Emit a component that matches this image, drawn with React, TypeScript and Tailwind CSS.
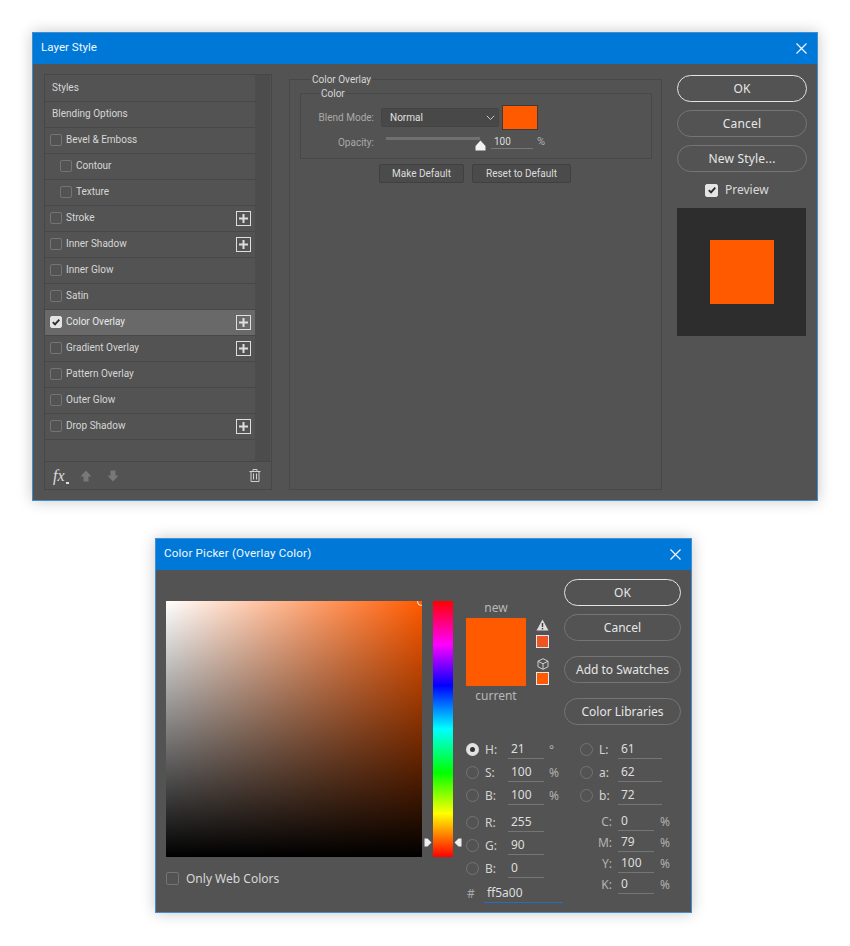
import React from "react";

function Close() {
  return (
    <svg width="11" height="11" viewBox="0 0 11 11" className="shrink-0">
      <path d="M0.5 0.5L10.5 10.5M10.5 0.5L0.5 10.5" stroke="#fff" strokeWidth="1.1" fill="none" />
    </svg>
  );
}

function TitleBar({ title, tracking = "tracking-normal" }: { title: string; tracking?: string }) {
  return (
    <div className={`flex h-[31px] items-center justify-between bg-[#0078d7] pb-[1px] pl-[8px] pr-[10px] font-['Roboto',sans-serif] text-[11.6px] text-[#f2f8fd] ${tracking}`}>
      <span>{title}</span>
      <Close />
    </div>
  );
}

function Check({ checked, size = "w-[12px] h-[12px]" }: { checked?: boolean; size?: string }) {
  return (
    <span
      className={`flex shrink-0 items-center justify-center rounded-[2px] border ${size} ${
        checked ? "border-[#e4e4e4] bg-[#e4e4e4]" : "border-[#747474] bg-transparent"
      }`}
    >
      {checked && (
        <svg width="10" height="10" viewBox="0 0 10 10">
          <path d="M1.8 5.2L4 7.4L8.3 2.6" stroke="#2c2c2c" strokeWidth="1.9" fill="none" />
        </svg>
      )}
    </span>
  );
}

function PlusBox() {
  return (
    <svg width="15" height="15" viewBox="0 0 15 15" className="block shrink-0">
      <rect x="0.5" y="0.5" width="14" height="14" fill="none" stroke="#dedede" />
      <path d="M7.5 3V12M3 7.5H12" stroke="#dedede" strokeWidth="2" />
    </svg>
  );
}

const rows: { label: string; check?: boolean; nested?: boolean; plus?: boolean; on?: boolean }[] = [
  { label: "Styles" },
  { label: "Blending Options" },
  { label: "Bevel & Emboss", check: true },
  { label: "Contour", check: true, nested: true },
  { label: "Texture", check: true, nested: true },
  { label: "Stroke", check: true, plus: true },
  { label: "Inner Shadow", check: true, plus: true },
  { label: "Inner Glow", check: true },
  { label: "Satin", check: true },
  { label: "Color Overlay", check: true, plus: true, on: true },
  { label: "Gradient Overlay", check: true, plus: true },
  { label: "Pattern Overlay", check: true },
  { label: "Outer Glow", check: true },
  { label: "Drop Shadow", check: true, plus: true },
];

function StyleRow({ r }: { r: (typeof rows)[number] }) {
  const pad = !r.check ? "pl-[7px]" : r.nested ? "pl-[15px]" : "pl-[5px]";
  return (
    <div
      className={`flex h-[26px] items-center border-b border-[#484848] pb-[2px] pr-[4px] text-[#d6d6d6] ${pad} ${
        r.on ? "bg-[#696969] text-[#e8e8e8]" : ""
      }`}
    >
      {r.check && <Check checked={r.on} />}
      <span className={r.check ? "ml-[4px]" : ""}>{r.label}</span>
      {r.plus && (
        <span className="ml-auto mt-[1px]">
          <PlusBox />
        </span>
      )}
    </div>
  );
}

function BlockArrow({ down }: { down?: boolean }) {
  return (
    <svg width="12" height="12" viewBox="0 0 12 12" className={down ? "rotate-180" : ""}>
      <path d="M6 0.5L11.5 6.5H8.5V11.5H3.5V6.5H0.5Z" fill="#787878" />
    </svg>
  );
}

function Trash() {
  return (
    <svg width="12" height="13" viewBox="0 0 12 13" fill="none" stroke="#cfcfcf">
      <path d="M0.5 2.5H11.5M4 2.5V0.5H8V2.5M2 2.5V12.5H10V2.5M4.5 4.5V10.5M7.5 4.5V10.5" />
    </svg>
  );
}

function LeftPanel() {
  return (
    <div className="mt-[2px] h-[416px] w-[228px] shrink-0 border border-[#474747]">
      <div className="flex h-[387px] border-b border-[#474747]">
        <div className="w-[210px] pt-[1px]">
          {rows.map((r) => (
            <StyleRow key={r.label} r={r} />
          ))}
        </div>
        <div className="w-[15px] bg-[#4c4c4c]" />
      </div>
      <div className="flex h-[27px] items-center pl-[8px] pr-[10px]">
        <span className="relative w-[25px] font-['Liberation_Serif',serif] text-[16px] italic text-[#dcdcdc]">
          fx
          <span className="absolute left-[13px] top-[18px] h-[2px] w-[3px] bg-[#e0e0e0]" />
        </span>
        <span className="ml-[2px]">
          <BlockArrow />
        </span>
        <span className="ml-[15px]">
          <BlockArrow down />
        </span>
        <span className="ml-auto">
          <Trash />
        </span>
      </div>
    </div>
  );
}

function ThinButton({ children, w }: { children: React.ReactNode; w: string }) {
  return (
    <div className={`flex h-[19px] items-center justify-center rounded-[2px] border border-[#404040] bg-[#4b4b4b] text-[#dcdcdc] ${w}`}>
      {children}
    </div>
  );
}

function MiddlePanel() {
  return (
    <fieldset className="h-[418px] w-[373px] shrink-0 border border-[#484848] pl-[10px] pr-[9px] text-[#d6d6d6]">
      <legend className="ml-[11px] h-[14px] px-[1px] leading-[16px]">Color Overlay</legend>
      <fieldset className="h-[73px] w-[352px] border border-[#484848]">
        <legend className="ml-[19px] h-[14px] px-[1px] leading-[16px]">Color</legend>
        <div className="mt-[5px] flex h-[25px] items-center">
          <span className="w-[73px] text-right text-[#a9a9a9]">Blend Mode:</span>
          <div className="ml-[7px] flex h-[19px] w-[118px] items-center justify-between rounded-[2px] border border-[#444444] bg-[#484848] pl-[8px] pr-[3px] text-[#e0e0e0]">
            <span>Normal</span>
            <svg width="9" height="6" viewBox="0 0 9 6">
              <path d="M0.8 0.8L4.5 4.5L8.2 0.8" stroke="#c6c6c6" fill="none" />
            </svg>
          </div>
          <div className="ml-[3px] h-[25px] w-[36px] border border-[#3c3c3c] bg-[#ff5a00]" />
        </div>
        <div className="mt-[1px] flex h-[22px] items-center">
          <span className="w-[73px] text-right text-[#a9a9a9]">Opacity:</span>
          <div className="relative ml-[12px] mt-[6px] h-[3px] w-[94px] self-start bg-[#707070]">
            <svg width="11" height="11" viewBox="0 0 11 11" className="absolute left-[89px] top-[3px]">
              <path d="M5.5 0.5L10.5 6V10.5H0.5V6Z" fill="#f2f2f2" />
            </svg>
          </div>
          <div className="ml-[11px] h-[14px] w-[42px] border-b border-[#777777] pl-[3px] leading-[13px] text-[#dcdcdc]">100</div>
          <span className="ml-[4px] text-[11px] text-[#b4b4b4]">%</span>
        </div>
      </fieldset>
      <div className="ml-[79px] mt-[5px] flex gap-[8px]">
        <ThinButton w="w-[85px]">Make Default</ThinButton>
        <ThinButton w="w-[99px]">Reset to Default</ThinButton>
      </div>
    </fieldset>
  );
}

function PillButton({
  children,
  primary,
  w,
  tracking = "tracking-[0.2px]",
  className = "",
}: {
  children: React.ReactNode;
  primary?: boolean;
  w: string;
  tracking?: string;
  className?: string;
}) {
  return (
    <div
      className={`flex h-[27px] items-center justify-center rounded-[14px] border font-['Noto_Sans',sans-serif] text-[12px] text-[#e6e6e6] ${tracking} ${w} ${
        primary ? "border-[#e4e4e4]" : "border-[#757575]"
      } ${className}`}
    >
      {children}
    </div>
  );
}

function RightPanel() {
  return (
    <div className="ml-[15px] mt-[3px] flex w-[130px] shrink-0 flex-col">
      <PillButton primary w="w-[130px]">OK</PillButton>
      <PillButton w="w-[130px]" className="mt-[8px]">Cancel</PillButton>
      <PillButton w="w-[130px]" className="mt-[8px]">New Style...</PillButton>
      <div className="ml-[28px] mt-[11px] flex h-[14px] items-center font-['Noto_Sans',sans-serif] text-[12px] text-[#dadada]">
        <Check checked size="w-[13px] h-[13px]" />
        <span className="ml-[7px]">Preview</span>
      </div>
      <div className="mt-[11px] flex h-[128px] w-[129px] items-center justify-center bg-[#2d2d2d]">
        <div className="h-[64px] w-[64px] bg-[#ff5a00]" />
      </div>
    </div>
  );
}

function LayerStyle() {
  return (
    <div className="h-[469px] w-[786px] border border-[#3f8fd2] bg-[#535353] font-['Roboto',sans-serif] text-[10px] shadow-[0_0_14px_rgba(0,0,0,0.22)]">
      <TitleBar title="Layer Style" />
      <div className="flex pl-[11px] pt-[8px]">
        <LeftPanel />
        <div className="ml-[17px]">
          <MiddlePanel />
        </div>
        <RightPanel />
      </div>
    </div>
  );
}

function Radio({ on }: { on?: boolean }) {
  return on ? (
    <span className="flex h-[13px] w-[13px] shrink-0 items-center justify-center rounded-full bg-[#e2e2e2]">
      <span className="h-[5px] w-[5px] rounded-full bg-[#333333]" />
    </span>
  ) : (
    <span className="h-[13px] w-[13px] shrink-0 rounded-full border border-[#747474]" />
  );
}

function Field({ value, w, blue }: { value: string; w: string; blue?: boolean }) {
  return (
    <div className={`h-[19px] border-b pl-[3px] leading-[18px] text-[#dedede] ${w} ${blue ? "border-[#2a6db5]" : "border-[#757575]"}`}>
      {value}
    </div>
  );
}

function ValueRow({ label, value, unit, on, lab }: { label: string; value: string; unit?: string; on?: boolean; lab?: boolean }) {
  return (
    <div className="flex h-[23px] items-center">
      <Radio on={on} />
      <span className={`ml-[6px] text-[#d2d2d2] ${lab ? "w-[19px]" : "w-[23px]"}`}>{label}</span>
      <Field value={value} w={lab ? "w-[44px]" : "w-[36px]"} />
      {unit && <span className="ml-[5px] text-[#b0b0b0]">{unit}</span>}
    </div>
  );
}

function CmykRow({ label, value }: { label: string; value: string }) {
  return (
    <div className="flex h-[21px] items-center">
      <span className="w-[32px] text-right text-[#b4b4b4]">{label}</span>
      <span className="ml-[6px]">
        <Field value={value} w="w-[36px]" />
      </span>
      <span className="ml-[6px] text-[#b0b0b0]">%</span>
    </div>
  );
}

function Warning() {
  return (
    <svg width="13" height="12" viewBox="0 0 13 12">
      <path d="M6.5 0.5L12.5 11.5H0.5Z" fill="#dcdcdc" />
      <path d="M6.5 4V8M6.5 9V10.5" stroke="#3a3a3a" strokeWidth="1.4" />
    </svg>
  );
}

function Cube() {
  return (
    <svg width="12" height="12" viewBox="0 0 12 12" fill="none" stroke="#cfcfcf" className="block">
      <path d="M6 0.7L11 3.2V8.8L6 11.3L1 8.8V3.2ZM1 3.2L6 5.8L11 3.2M6 5.8V11.3" />
    </svg>
  );
}

function ColorPicker() {
  return (
    <div className="ml-[123px] mt-[37px] h-[375px] w-[537px] border border-[#3f8fd2] bg-[#535353] font-['Noto_Sans',sans-serif] text-[12px] shadow-[0_0_14px_rgba(0,0,0,0.22)]">
      <TitleBar title="Color Picker (Overlay Color)" tracking="tracking-[0.2px]" />
      <div className="flex pl-[10px]">
        <div className="w-[287px] shrink-0 pt-[31px]">
          <div className="flex">
            <div className="relative h-[256px] w-[256px] shrink-0 overflow-hidden bg-[linear-gradient(to_top,#000,transparent),linear-gradient(to_right,#fff,#ff5a00)]">
              <span className="absolute right-[-4px] top-[-4px] h-[9px] w-[9px] rounded-full border border-[#f4f4f4]" />
            </div>
            <div className="relative ml-[11px] h-[256px] w-[20px] shrink-0 bg-[linear-gradient(to_bottom,#ff0000,#ff00ff_17%,#0000ff_33%,#00ffff_50%,#00ff00_67%,#ffff00_83%,#ff0000)]">
              <svg width="8" height="9" viewBox="0 0 8 9" className="absolute left-[-9px] top-[237px]">
                <path d="M0.5 0.5H3.5L7.5 4.5L3.5 8.5H0.5Z" fill="#efefef" />
              </svg>
              <svg width="8" height="9" viewBox="0 0 8 9" className="absolute right-[-9px] top-[237px]">
                <path d="M7.5 0.5H4.5L0.5 4.5L4.5 8.5H7.5Z" fill="#efefef" />
              </svg>
            </div>
          </div>
          <div className="mt-[14px] flex h-[14px] items-center text-[#d8d8d8]">
            <Check size="w-[13px] h-[13px]" />
            <span className="ml-[7px] mt-[1px]">Only Web Colors</span>
          </div>
        </div>
        <div className="ml-[13px] w-[216px] shrink-0">
          <div className="flex h-[168px]">
            <div className="w-[60px] shrink-0 pt-[30px] text-center text-[#b8b8b8]">
              <div className="h-[18px] leading-[16px]">new</div>
              <div className="h-[68px] bg-[#ff5a00]" />
              <div className="mt-[1px] leading-[18px]">current</div>
            </div>
            <div className="ml-[10px] mt-[49px] flex w-[13px] shrink-0 flex-col items-center">
              <Warning />
              <div className="mt-[4px] h-[13px] w-[13px] border border-[#e8e8e8] bg-[#ee5522]" />
              <div className="mt-[10px]">
                <Cube />
              </div>
              <div className="mt-[2px] h-[13px] w-[13px] border border-[#e8e8e8] bg-[#ff5a00]" />
            </div>
            <div className="ml-[15px] flex w-[117px] shrink-0 flex-col pt-[9px]">
              <PillButton primary w="w-[117px]" tracking="tracking-normal">OK</PillButton>
              <PillButton w="w-[117px]" tracking="tracking-normal" className="mt-[8px]">Cancel</PillButton>
              <PillButton w="w-[117px]" tracking="tracking-normal" className="mt-[15px]">Add to Swatches</PillButton>
              <PillButton w="w-[117px]" tracking="tracking-normal" className="mt-[15px]">Color Libraries</PillButton>
            </div>
          </div>
          <div className="flex">
            <div className="w-[114px] shrink-0">
              <ValueRow label="H:" value="21" unit="°" on />
              <ValueRow label="S:" value="100" unit="%" />
              <ValueRow label="B:" value="100" unit="%" />
              <div className="mt-[4px]">
                <ValueRow label="R:" value="255" />
                <ValueRow label="G:" value="90" />
                <ValueRow label="B:" value="0" />
              </div>
              <div className="mt-[2px] flex h-[23px] items-center pl-[1px]">
                <span className="w-[17px] text-[#a8a8a8]">#</span>
                <Field value="ff5a00" w="w-[79px]" blue />
              </div>
            </div>
            <div className="w-[96px] shrink-0">
              <ValueRow label="L:" value="61" lab />
              <ValueRow label="a:" value="62" lab />
              <ValueRow label="b:" value="72" lab />
              <div className="mt-[4px]">
                <CmykRow label="C:" value="0" />
                <CmykRow label="M:" value="79" />
                <CmykRow label="Y:" value="100" />
                <CmykRow label="K:" value="0" />
              </div>
            </div>
          </div>
        </div>
      </div>
    </div>
  );
}

export default function App() {
  return (
    <div className="h-[946px] w-[850px] bg-white pl-[32px] pt-[32px]">
      <LayerStyle />
      <ColorPicker />
    </div>
  );
}
